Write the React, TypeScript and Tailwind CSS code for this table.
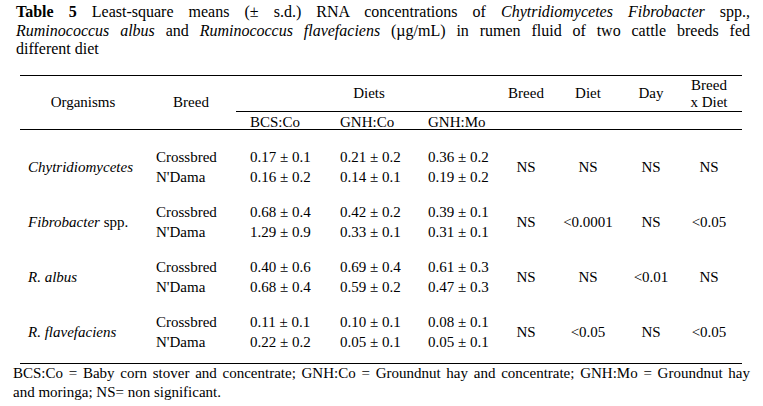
import React from "react";

const COLS = "grid grid-cols-[126px_90px_90px_88px_88px_48px_76px_50px_66px]";

type Group = {
  org: React.ReactNode;
  a: [string, string];
  b: [string, string];
  c: [string, string];
  s: [string, string, string, string];
};

const groups: Group[] = [
  {
    org: <i>Chytridiomycetes</i>,
    a: ["0.17 ± 0.1", "0.16 ± 0.2"],
    b: ["0.21 ± 0.2", "0.14 ± 0.1"],
    c: ["0.36 ± 0.2", "0.19 ± 0.2"],
    s: ["NS", "NS", "NS", "NS"],
  },
  {
    org: (
      <span>
        <i>Fibrobacter</i> spp.
      </span>
    ),
    a: ["0.68 ± 0.4", "1.29 ± 0.9"],
    b: ["0.42 ± 0.2", "0.33 ± 0.1"],
    c: ["0.39 ± 0.1", "0.31 ± 0.1"],
    s: ["NS", "<0.0001", "NS", "<0.05"],
  },
  {
    org: <i>R. albus</i>,
    a: ["0.40 ± 0.6", "0.68 ± 0.4"],
    b: ["0.69 ± 0.4", "0.59 ± 0.2"],
    c: ["0.61 ± 0.3", "0.47 ± 0.3"],
    s: ["NS", "NS", "<0.01", "NS"],
  },
  {
    org: <i>R. flavefaciens</i>,
    a: ["0.11 ± 0.1", "0.22 ± 0.2"],
    b: ["0.10 ± 0.1", "0.05 ± 0.1"],
    c: ["0.08 ± 0.1", "0.05 ± 0.1"],
    s: ["NS", "<0.05", "NS", "<0.05"],
  },
];

function GroupRows({ g }: { g: Group }) {
  return (
    <div className={`${COLS} grid-rows-[20px_20px] leading-[20px]`}>
      <div className="row-span-2 flex items-center pl-[8px]">{g.org}</div>
      <div className="pl-[10px]">Crossbred</div>
      <div className="pl-[14px]">{g.a[0]}</div>
      <div className="pl-[14px]">{g.b[0]}</div>
      <div className="pl-[14px]">{g.c[0]}</div>
      {g.s.map((v, i) => (
        <div key={i} className="row-span-2 flex items-center justify-center">
          {v}
        </div>
      ))}
      <div className="pl-[10px]">N'Dama</div>
      <div className="pl-[14px]">{g.a[1]}</div>
      <div className="pl-[14px]">{g.b[1]}</div>
      <div className="pl-[14px]">{g.c[1]}</div>
    </div>
  );
}

export default function App() {
  return (
    <div className="w-[763px] h-[406px] bg-white text-black font-['Liberation_Serif',serif] overflow-hidden">
      <div className="pl-[16px] w-[750px] pt-[3px] text-[16px] leading-[18.5px]">
        <div className="text-justify [text-align-last:justify]">
          <b>Table 5</b> Least-square means (± s.d.) RNA concentrations of{" "}
          <i>Chytridiomycetes Fibrobacter</i> spp.,
        </div>
        <div className="text-justify [text-align-last:justify]">
          <i>Ruminococcus albus</i> and <i>Ruminococcus flavefaciens</i> (µg/mL) in rumen fluid of two
          cattle breeds fed
        </div>
        <div>different diet</div>
      </div>

      <div className="ml-[20px] mt-[16.5px] w-[722px] border-t border-b border-black text-[15px]">
        <div className={`${COLS} grid-rows-[36px_17px] border-b border-black leading-[17px]`}>
          <div className="row-span-2 flex items-center justify-center">Organisms</div>
          <div className="row-span-2 flex items-center justify-center">Breed</div>
          <div className="col-span-3 flex items-center justify-center border-b border-black">Diets</div>
          <div className="flex items-center justify-center border-b border-black">Breed</div>
          <div className="flex items-center justify-center border-b border-black">Diet</div>
          <div className="flex items-center justify-center border-b border-black">Day</div>
          <div className="flex flex-col items-center justify-center border-b border-black text-center">
            <span>Breed</span>
            <span>x Diet</span>
          </div>
          <div className="flex items-center pl-[14px] pt-[3px]">BCS:Co</div>
          <div className="flex items-center pl-[14px] pt-[3px]">GNH:Co</div>
          <div className="flex items-center pl-[14px] pt-[3px]">GNH:Mo</div>
          <div className="col-span-4" />
        </div>
        <div className="flex flex-col gap-[15px] pt-[17px] pb-[11px]">
          {groups.map((g, i) => (
            <GroupRows key={i} g={g} />
          ))}
        </div>
      </div>

      <div className="ml-[13px] w-[737px] text-[15px] leading-[19px]">
        <div className="text-justify [text-align-last:justify]">
          BCS:Co = Baby corn stover and concentrate; GNH:Co = Groundnut hay and concentrate; GNH:Mo =
          Groundnut hay
        </div>
        <div>and moringa; NS= non significant.</div>
      </div>
    </div>
  );
}
